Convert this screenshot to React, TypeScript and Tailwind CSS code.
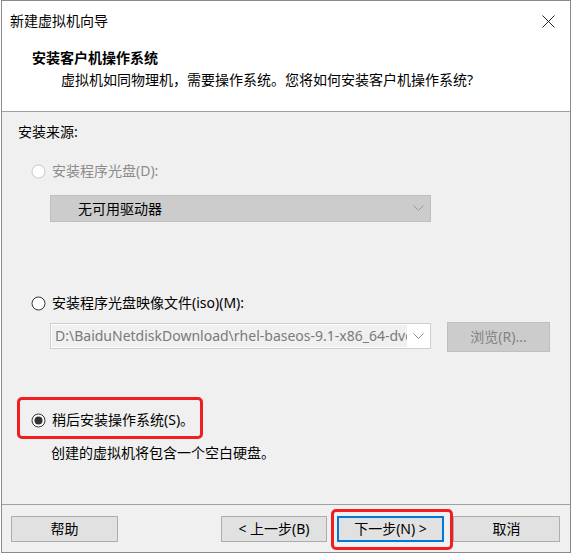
import React from "react";

const Chevron = ({ color = "#8a8a8a" }: { color?: string }) => (
  <svg width="11" height="7" viewBox="0 0 11 7" fill="none">
    <path d="M0.5 0.5 L5.5 5.5 L10.5 0.5" stroke={color} strokeWidth="1" />
  </svg>
);

const Radio = ({ state }: { state: "disabled" | "off" | "on" }) => {
  const border = state === "disabled" ? "#c8c8c8" : "#333333";
  return (
    <svg width="15" height="15" viewBox="0 0 15 15">
      <circle cx="7.5" cy="7.5" r="6.5" fill="#ffffff" stroke={border} strokeWidth="1" />
      {state === "on" && <circle cx="7.5" cy="7.5" r="4" fill="#333333" />}
    </svg>
  );
};

export default function App() {
  return (
    <div
      className="relative w-[572px] h-[553px] bg-white text-[14px] text-black"
      style={{ fontFamily: '"Noto Sans", "Noto Sans CJK SC", sans-serif' }}
    >
      <div className="ml-[1px] w-[570px] h-[553px] border border-[#8a8a8a] flex flex-col bg-[#f0f0f0]">
        {/* Header */}
        <div className="h-[111px] bg-white border-b border-[#a0a0a0] flex flex-col">
          <div className="h-[40px] flex items-center pl-[8px] pr-[15px]">
            <span className="leading-[20px]">新建虚拟机向导</span>
            <div className="flex-1" />
            <svg width="13" height="13" viewBox="0 0 13 13">
              <path d="M0.5 0.5 L12.5 12.5 M12.5 0.5 L0.5 12.5" stroke="#222" strokeWidth="1" />
            </svg>
          </div>
          <div className="mt-[7px] pl-[30px] leading-[20px] font-bold">安装客户机操作系统</div>
          <div className="mt-[2px] pl-[59px] leading-[20px]">
            虚拟机如同物理机，需要操作系统。您将如何安装客户机操作系统?
          </div>
        </div>

        {/* Content */}
        <div className="flex-1 flex flex-col">
          <div className="mt-[10px] pl-[16px] leading-[20px]">安装来源:</div>

          <div className="mt-[19px] pl-[29px] h-[20px] flex items-center">
            <Radio state="disabled" />
            <span className="ml-[6px] leading-[20px] text-[#8c8c8c]">安装程序光盘(D):</span>
          </div>

          <div className="mt-[14px] ml-[48px] w-[381px] h-[27px] bg-[#cccccc] border border-[#bfbfbf] flex items-center pl-[27px] pr-[6px]">
            <span className="leading-[20px] flex-1">无可用驱动器</span>
            <Chevron color="#9a9a9a" />
          </div>

          <div className="mt-[71px] pl-[29px] h-[20px] flex items-center">
            <Radio state="off" />
            <span className="ml-[6px] leading-[20px]">安装程序光盘映像文件(iso)(M):</span>
          </div>

          <div className="mt-[9px] ml-[48px] h-[30px] flex items-start">
            <div className="mt-[1px] w-[381px] h-[26px] bg-white border border-[#cfcfcf] flex items-center pl-[1px] pr-[6px]">
              <div className="w-[355px] h-[22px] bg-[#f0f0f0] overflow-hidden whitespace-nowrap pl-[3px] leading-[22px] text-[#7a7a7a]">
                D:\BaiduNetdiskDownload\rhel-baseos-9.1-x86_64-dvd.iso
              </div>
              <div className="flex-1" />
              <Chevron />
            </div>
            <div className="ml-[16px] w-[103px] h-[30px] bg-[#cccccc] border border-[#bfbfbf] flex items-center justify-center text-[#838383] leading-[20px]">
              浏览(R)...
            </div>
          </div>

          <div className="mt-[58px] pl-[29px] h-[20px] flex items-center">
            <Radio state="on" />
            <span className="ml-[6px] leading-[20px]">稍后安装操作系统(S)。</span>
          </div>

          <div className="mt-[13px] pl-[49px] leading-[20px]">创建的虚拟机将包含一个空白硬盘。</div>
        </div>

        {/* Footer */}
        <div className="h-[48px] border-t border-[#a0a0a0] pt-[11px] flex items-start">
          <div className="ml-[9px] w-[107px] h-[26px] bg-[#e1e1e1] border border-[#adadad] flex items-center justify-center leading-[20px]">
            帮助
          </div>
          <div className="ml-[103px] w-[106px] h-[26px] bg-[#e1e1e1] border border-[#adadad] flex items-center justify-center leading-[20px]">
            &lt; 上一步(B)
          </div>
          <div className="ml-[10px] w-[107px] h-[26px] bg-[#e1e1e1] border-2 border-[#0078d7] flex items-center justify-center leading-[20px]">
            下一步(N) &gt;
          </div>
          <div className="ml-[9px] w-[107px] h-[26px] bg-[#e1e1e1] border border-[#adadad] flex items-center justify-center leading-[20px]">
            取消
          </div>
        </div>
      </div>

      {/* Annotation highlights */}
      <div className="absolute left-[17px] top-[397px] w-[186px] h-[42px] border-[3px] border-[#f01e1e] rounded-[5px]" />
      <div className="absolute left-[331px] top-[509px] w-[122px] h-[41px] border-[3px] border-[#f01e1e] rounded-[5px]" />
    </div>
  );
}
